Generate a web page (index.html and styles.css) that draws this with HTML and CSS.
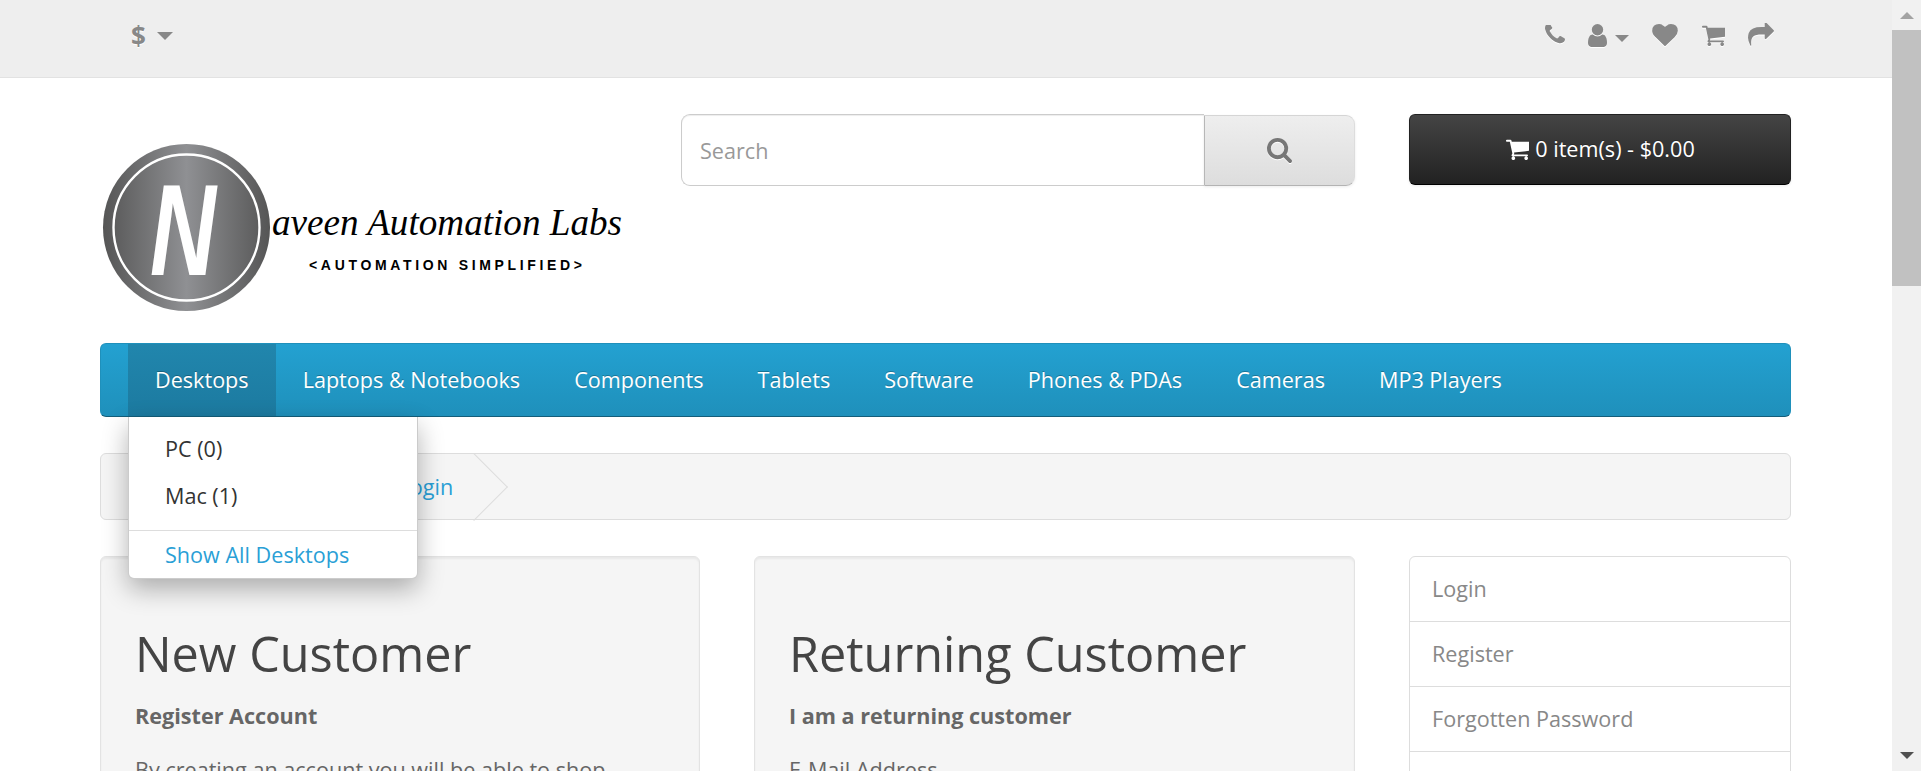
FILE: index.html
```html
<!DOCTYPE html>
<html lang="en">
<head>
<meta charset="utf-8">
<title>Account Login</title>
<link rel="stylesheet" href="styles.css">
</head>
<body>
<div class="viewport">
  <div class="page">
    <nav class="topbar">
      <div class="container topbar-inner">
        <div class="currency"><span class="dollar">$</span><span class="caret"></span></div>
        <div class="top-links">
          <svg class="ti ti-phone" viewBox="192 256 1408 1408"><path d="M1600 1240q0 27-10 70.5t-21 68.5q-21 50-122 106-94 51-186 51-27 0-53-3.5t-57.5-12.5-47-14.5-55.5-20.5-49-18q-98-35-175-83-127-79-264-216t-216-264q-48-77-83-175-3-9-18-49t-20.5-55.5-14.5-47-12.5-57.5-3.5-53q0-92 51-186 56-101 106-122 25-11 68.5-21t70.5-10q14 0 21 3 18 6 53 76 11 19 30 54t35 63.5 31 53.5q3 4 17.5 25t21.5 35.5 7 28.5q0 20-28.5 50t-62 55-62 53-28.5 46q0 9 5 22.5t8.5 20.5 14 24 11.5 19q76 137 174 235t235 174q2 1 19 11.5t24 14 20.5 8.5 22.5 5q18 0 46-28.5t53-62 55-62 50-28.5q14 0 28.5 7t35.5 21.5 25 17.5q25 15 53.5 31t63.5 35 54 30q70 35 76 53 3 7 3 21z"/></svg>
          <svg class="ti ti-user" viewBox="256 128 1280 1536"><path d="M1536 1399q0 109-62.5 187t-150.5 78h-854q-88 0-150.5-78t-62.5-187q0-85 8.5-160.5t31.5-152 58.5-131 94-89 134.5-34.5q131 128 313 128t313-128q76 0 134.5 34.5t94 89 58.5 131 31.5 152 8.5 160.5zm-256-887q0 159-112.5 271.5t-271.5 112.5-271.5-112.5-112.5-271.5 112.5-271.5 271.5-112.5 271.5 112.5 112.5 271.5z"/></svg>
          <span class="caret caret-user"></span>
          <svg class="ti ti-heart" viewBox="0 128 1792 1536"><path d="M896 1664q-26 0-44-18l-624-602q-10-8-27.5-26t-55.5-65.5-68-97.5-53.5-121-23.5-138q0-220 127-344t351-124q62 0 126.5 21.5t120 58 95.5 68.5 76 68q36-36 76-68t95.5-68.5 120-58 126.5-21.5q224 0 351 124t127 344q0 221-229 450l-623 600q-18 18-44 18z"/></svg>
          <svg class="ti ti-cart" viewBox="0 128 1664 1536"><path d="M704 1536q0 52-38 90t-90 38-90-38-38-90 38-90 90-38 90 38 38 90zm896 0q0 52-38 90t-90 38-90-38-38-90 38-90 90-38 90 38 38 90zm128-1088v512q0 24-16.5 42.5t-40.5 21.5l-1044 122q13 60 13 70 0 16-24 64h920q26 0 45 19t19 45-19 45-45 19h-1024q-26 0-45-19t-19-45q0-11 8-31.5t16-36 21.5-40 15.5-29.5l-177-823h-204q-26 0-45-19t-19-45 19-45 45-19h256q16 0 28.5 6.5t19.5 15.5 13 24.5 8 26 5.5 29.5 4.5 26h1201q26 0 45 19t19 45z"/></svg>
          <svg class="ti ti-share" viewBox="0 128 1792 1536"><path d="M1792 640q0 26-19 45l-512 512q-19 19-45 19t-45-19-19-45v-256h-224q-98 0-175.5 6t-154 21.5-133 42.5-105.5 69.5-80 101-48.5 138.5-17.5 181q0 55 5 123 0 6 2.5 23.5t2.5 26.5q0 15-8.5 25t-23.5 10q-16 0-28-17-7-9-13-22t-13.5-30-10.5-24q-127-285-127-451 0-199 53-333 162-403 875-403h224v-256q0-26 19-45t45-19 45 19l512 512q19 19 19 45z"/></svg>
        </div>
      </div>
    </nav>

    <header class="container header">
      <svg class="logo" viewBox="0 0 527 210">
        <defs>
          <linearGradient id="metal" x1="0" x2="1" y1="0" y2="0">
            <stop offset="0" stop-color="#555"/>
            <stop offset="0.5" stop-color="#8f9093"/>
            <stop offset="1" stop-color="#555"/>
          </linearGradient>
        </defs>
        <circle class="logo-disc" cx="86.5" cy="113.5" r="83.5"/>
        <circle class="logo-ring" cx="86.5" cy="113.5" r="73"/>
        <text class="logo-n" x="50" y="161" textLength="66" lengthAdjust="spacingAndGlyphs">N</text>
        <text class="logo-script" x="172" y="121" textLength="350" lengthAdjust="spacingAndGlyphs">aveen Automation Labs</text>
        <text class="logo-tag" x="209" y="156" textLength="273">&lt;AUTOMATION SIMPLIFIED&gt;</text>
      </svg>
      <div class="search">
        <input class="search-input" type="text" placeholder="Search">
        <button class="search-btn" type="button">
          <svg class="search-icon" viewBox="0 0 1664 1664"><path d="M1216 832q0-185-131.5-316.5t-316.5-131.5-316.5 131.5-131.5 316.5 131.5 316.5 316.5 131.5 316.5-131.5 131.5-316.5zm512 832q0 52-38 90t-90 38q-54 0-90-38l-343-342q-179 124-399 124-143 0-273.5-55.5t-225-150-150-225-55.5-273.5 55.5-273.5 150-225 225-150 273.5-55.5 273.5 55.5 225 150 150 225 55.5 273.5q0 220-124 399l343 343q37 37 37 90z" transform="translate(-64 -128)"/></svg>
        </button>
      </div>
      <button class="cart-btn" type="button">
        <svg class="cart-icon" viewBox="0 128 1664 1536"><path d="M704 1536q0 52-38 90t-90 38-90-38-38-90 38-90 90-38 90 38 38 90zm896 0q0 52-38 90t-90 38-90-38-38-90 38-90 90-38 90 38 38 90zm128-1088v512q0 24-16.5 42.5t-40.5 21.5l-1044 122q13 60 13 70 0 16-24 64h920q26 0 45 19t19 45-19 45-45 19h-1024q-26 0-45-19t-19-45q0-11 8-31.5t16-36 21.5-40 15.5-29.5l-177-823h-204q-26 0-45-19t-19-45 19-45 45-19h256q16 0 28.5 6.5t19.5 15.5 13 24.5 8 26 5.5 29.5 4.5 26h1201q26 0 45 19t19 45z"/></svg>
        <span>0 item(s) - $0.00</span>
      </button>
    </header>

    <div class="container">
      <nav class="menu">
        <ul class="menu-list">
          <li class="menu-item is-open">
            <a href="#">Desktops</a>
            <div class="dropdown">
              <a class="dd-link" href="#">PC (0)</a>
              <a class="dd-link" href="#">Mac (1)</a>
              <a class="dd-all" href="#">Show All Desktops</a>
            </div>
          </li>
          <li class="menu-item"><a href="#">Laptops &amp; Notebooks</a></li>
          <li class="menu-item"><a href="#">Components</a></li>
          <li class="menu-item"><a href="#">Tablets</a></li>
          <li class="menu-item"><a href="#">Software</a></li>
          <li class="menu-item"><a href="#">Phones &amp; PDAs</a></li>
          <li class="menu-item"><a href="#">Cameras</a></li>
          <li class="menu-item"><a href="#">MP3 Players</a></li>
        </ul>
      </nav>

      <ul class="breadcrumb">
        <li class="crumb"><a href="#"><svg class="home-icon" viewBox="0 0 1792 1792"><path d="M1472 992v480q0 26-19 45t-45 19h-384v-384h-256v384h-384q-26 0-45-19t-19-45v-480q0-1 .5-3t.5-3l575-474 575 474q1 2 1 6zm223-69l-62 74q-8 9-21 11h-3q-13 0-21-7l-692-577-692 577q-12 8-24 7-13-2-21-11l-62-74q-8-10-7-23.5t11-21.5l719-599q32-26 76-26t76 26l244 204v-195q0-14 9-23t23-9h192q14 0 23 9t9 23v408l219 182q10 8 11 21.5t-7 23.5z"/></svg></a></li>
        <li class="crumb"><a href="#">Account</a></li>
        <li class="crumb"><a href="#">Login</a></li>
      </ul>

      <div class="content">
        <section class="well">
          <h2 class="well-title">New Customer</h2>
          <p class="well-sub">Register Account</p>
          <p class="well-text">By creating an account you will be able to shop faster, be up to date on an order's status.</p>
        </section>
        <section class="well">
          <h2 class="well-title">Returning Customer</h2>
          <p class="well-sub">I am a returning customer</p>
          <p class="well-text">E-Mail Address</p>
        </section>
        <aside class="side-list">
          <a href="#">Login</a>
          <a href="#">Register</a>
          <a href="#">Forgotten Password</a>
          <a href="#">My Account</a>
        </aside>
      </div>
    </div>
  </div>
  <div class="scrollbar">
    <span class="sb-up"></span>
    <span class="sb-thumb"></span>
    <span class="sb-down"></span>
  </div>
</div>
</body>
</html>
```

FILE: styles.css
```css
* { box-sizing: border-box; }
html, body { margin: 0; height: 100%; overflow: hidden; }
body { font-family: "Open Sans", sans-serif; font-size: 21.6px; color: #666; background: #fff; }
a { text-decoration: none; color: inherit; }
ul { list-style: none; margin: 0; padding: 0; }

.viewport { display: flex; height: 771px; }
.page { flex: 1; min-width: 0; overflow: hidden; }
.container { width: 1691px; margin: 0 0 0 100px; }

.topbar { height: 78px; background: #eee; border-bottom: 1px solid #e2e2e2; }
.topbar-inner { display: flex; justify-content: space-between; height: 100%; position: relative; }
.currency { display: flex; align-items: center; padding-left: 31px; gap: 11px; height: 72px; }
.dollar { font-family: "Open Sans", sans-serif; font-weight: 700; font-size: 26px; line-height: 1; color: #888; text-shadow: 0 1px 0 #fff; }
.caret { width: 0; height: 0; border-left: 8px solid transparent; border-right: 8px solid transparent; border-top: 8px solid #888; }

.top-links { display: flex; align-items: flex-start; padding-top: 24px; padding-right: 17px; }
.ti { fill: #888; display: block; filter: drop-shadow(0 1px 0 #fff); }
.ti-phone { width: 20px; height: 20px; margin-top: 1px; }
.ti-user { width: 19px; height: 23px; margin-left: 23px; }
.caret-user { margin: 11px 0 0 8px; border-left-width: 7px; border-right-width: 7px; border-top-width: 7px; }
.ti-heart { width: 26px; height: 22px; margin-left: 23px; }
.ti-cart { width: 24px; height: 22px; margin-left: 23px; }
.ti-share { width: 26px; height: 23px; margin-left: 23px; margin-top: -1px; }

.header { display: grid; grid-template-columns: 527px 674px 382px; column-gap: 54px; height: 265px; padding-top: 36px; align-items: start; }
.logo { display: block; width: 527px; height: 210px; }
.logo-disc { fill: url(#metal); }
.logo-ring { fill: none; stroke: #fff; stroke-width: 2.4; }
.logo-n { font-family: "Liberation Sans", sans-serif; font-weight: 700; font-style: italic; font-size: 130px; fill: #fff; }
.logo-script { font-family: "Liberation Serif", serif; font-style: italic; font-size: 37px; fill: #000; }
.logo-tag { font-family: "Liberation Sans", sans-serif; font-weight: 700; font-size: 14px; fill: #000; }

.search { display: flex; height: 72px; }
.search-input { flex: 1; min-width: 0; height: 72px; padding: 0 18px; border: 1px solid #ccc; border-right: 0; border-radius: 9px 0 0 9px; font: 400 21.6px "Open Sans", sans-serif; color: #555; background: #fff; box-shadow: inset 0 1px 1px rgba(0,0,0,.075); outline: 0; }
.search-input::placeholder { color: #999; opacity: 1; }
.search-btn { width: 151px; height: 71px; margin-top: 1px; padding: 0; border: 1px solid; border-color: #d5d5d5 #ddd #b3b3b3 #b7b7b7; border-radius: 0 9px 9px 0; background: linear-gradient(to bottom, #eee, #ddd); box-shadow: 0 1px 3px rgba(0,0,0,.08); display: flex; align-items: center; justify-content: center; }
.search-icon { width: 25px; height: 25px; fill: #777; filter: drop-shadow(0 1px 0 #fff); }

.cart-btn { width: 382px; height: 71px; padding: 0 0 2px; border: 1px solid #222; border-bottom-color: #000; border-radius: 6px; background: linear-gradient(to bottom, #444, #222); box-shadow: 0 1px 3px rgba(0,0,0,.08); color: #fff; display: flex; align-items: center; justify-content: center; gap: 6px; font: 400 21.6px "Open Sans", sans-serif; text-shadow: 0 -1px 0 rgba(0,0,0,.25); }
.cart-icon { width: 24px; height: 22px; fill: #fff; }

.menu { height: 74px; background: linear-gradient(to bottom, #23a1d1, #1f90bb); border: 1px solid #1f90bb; border-bottom-color: #145e7a; border-radius: 6px; }
.menu-list { display: flex; height: 72px; padding-left: 27px; }
.menu-item { position: relative; display: flex; align-items: center; padding: 0 27px 2px; color: #fff; font-size: 21.6px; text-shadow: 0 -1px 0 rgba(0,0,0,.25); }
.menu-item.is-open { background: linear-gradient(to bottom, #2186ad, #1c7aa0); }
.dropdown { position: absolute; z-index: 5; top: 73px; left: 0; width: 290px; height: 162px; padding-top: 8px; background: #fff; border: 1px solid rgba(0,0,0,.2); border-top: 0; border-radius: 0 0 6px 6px; box-shadow: 0 10px 26px rgba(0,0,0,.3); text-shadow: none; display: flex; flex-direction: column; }
.dd-link { display: block; height: 47px; line-height: 47px; padding-left: 36px; color: #333; font-size: 21.6px; }
.dd-all { display: block; margin-top: 11px; padding: 8px 0 0 36px; border-top: 1px solid #ddd; color: #2a9fd6; font-size: 21.6px; line-height: 32px; }

.breadcrumb { display: flex; align-items: center; height: 67px; margin-top: 36px; padding-left: 17px; background: #f5f5f5; border: 1px solid #ddd; border-radius: 6px; }
.crumb { position: relative; display: flex; align-items: center; height: 65px; padding: 0 35px; color: #2a9fd6; font-size: 21.6px; }
.crumb::after { content: ""; position: absolute; top: 9px; right: -10px; width: 47px; height: 47px; border-right: 1px solid #ddd; border-bottom: 1px solid #ddd; transform: rotate(-45deg); }
.home-icon { display: block; width: 24px; height: 24px; fill: #2a9fd6; }

.content { display: grid; grid-template-columns: 600px 601px 382px; column-gap: 54px; margin-top: 36px; align-items: start; }
.well { padding: 66px 34px 30px; background: #f5f5f5; border: 1px solid #e3e3e3; border-radius: 6px; box-shadow: inset 0 2px 2px rgba(0,0,0,.05); }
.well-title { margin: 0 0 18px; font-size: 48.6px; line-height: 60px; font-weight: 400; color: #444; }
.well-sub { margin: 0 0 24px; font-size: 21.6px; line-height: 30px; font-weight: 700; color: #666; }
.well-text { margin: 0; font-size: 21.6px; line-height: 30px; color: #666; }

.side-list { border: 1px solid #ddd; border-radius: 6px; display: flex; flex-direction: column; }
.side-list a { display: block; height: 65px; padding: 17px 22px; line-height: 30px; color: #888; border-top: 1px solid #ddd; font-size: 21.6px; }
.side-list a:first-child { height: 64px; border-top: 0; }

.scrollbar { position: relative; flex: 0 0 29px; background: #f1f1f1; display: flex; flex-direction: column; align-items: center; }
.sb-up { flex: none; margin-top: 12px; width: 0; height: 0; border-left: 7px solid transparent; border-right: 7px solid transparent; border-bottom: 7px solid #a3a3a3; }
.sb-thumb { flex: none; width: 100%; height: 256px; margin-top: 11px; background: #c1c1c1; }
.sb-down { margin-top: auto; margin-bottom: 12px; width: 0; height: 0; border-left: 7px solid transparent; border-right: 7px solid transparent; border-top: 7px solid #505050; }
```
